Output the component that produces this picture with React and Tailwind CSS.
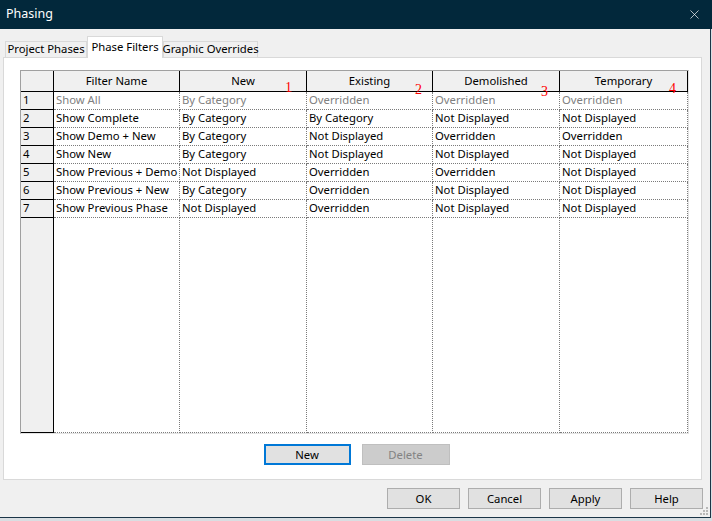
import { X } from 'lucide-react'

const COLUMNAS = ['Filter Name', 'New', 'Existing', 'Demolished', 'Temporary']

const FILTROS = [
    ['Show All', 'By Category', 'Overridden', 'Overridden', 'Overridden'],
    ['Show Complete', 'By Category', 'By Category', 'Not Displayed', 'Not Displayed'],
    ['Show Demo + New', 'By Category', 'Not Displayed', 'Overridden', 'Overridden'],
    ['Show New', 'By Category', 'Not Displayed', 'Not Displayed', 'Not Displayed'],
    ['Show Previous + Demo', 'Not Displayed', 'Overridden', 'Overridden', 'Not Displayed'],
    ['Show Previous + New', 'By Category', 'Overridden', 'Not Displayed', 'Not Displayed'],
    ['Show Previous Phase', 'Not Displayed', 'Overridden', 'Not Displayed', 'Not Displayed'],
]

// marcas rojas sobre la cabecera
const MARCAS = [
    { n: '1', cls: 'left-[264px] top-[10px]' },
    { n: '2', cls: 'left-[394px] top-[12px]' },
    { n: '3', cls: 'left-[520px] top-[14px]' },
    { n: '4', cls: 'left-[648px] top-[11px]' },
]

const GRID = 'grid grid-cols-[33px_126px_127px_126px_127px_128px]'

function Boton({ children, className = '' }) {
    return (
        <button className={`h-[21px] w-[73px] bg-[#e1e1e1] border border-[#adadad] text-black leading-none ${className}`}>
            {children}
        </button>
    )
}

export default function App() {
    return (
        <div className="w-[712px] h-[521px] bg-[#d9dee2] relative font-['Noto_Sans',sans-serif] text-[11.3px] text-black overflow-hidden">
            {/* Barra de título */}
            <div className="h-[29px] bg-[#02283b] flex items-center justify-between pl-[6px] pr-[10px] text-white">
                <span className="text-[12.5px]">Phasing</span>
                <X size={15} strokeWidth={1.1} />
            </div>

            <div className="w-[711px] h-[489px] bg-[#f0f0f0] border-r border-b border-[#1b3547] flex flex-col">
                {/* Pestañas */}
                <div className="mt-[7px] h-[21px] pl-[5px] flex items-end relative z-10">
                    <div className="h-[16px] w-[82px] border border-b-0 border-[#d9d9d9] bg-[#f0f0f0] flex items-center justify-center whitespace-nowrap">
                        Project Phases
                    </div>
                    <div className="h-[22px] w-[76px] -mb-px border border-b-0 border-[#d9d9d9] bg-white flex items-start pt-[2px] justify-center whitespace-nowrap">
                        Phase Filters
                    </div>
                    <div className="h-[16px] w-[95px] border border-b-0 border-[#d9d9d9] bg-[#f0f0f0] flex items-center justify-center whitespace-nowrap">
                        Graphic Overrides
                    </div>
                </div>

                {/* Panel */}
                <div className="ml-[3px] w-[699px] h-[423px] bg-white border border-[#d9d9d9] flex flex-col">
                    <div className="ml-[16px] mt-[12px] w-[669px] h-[364px] border-t border-l border-[#a0a0a0] border-b border-r border-b-[#e3e3e3] border-r-[#e3e3e3] flex flex-col relative">
                        {/* Cabecera */}
                        <div className={`${GRID} h-[21px] bg-[#f0f0f0]`}>
                            <div className="border-r border-b border-black" />
                            {COLUMNAS.map(c => (
                                <div key={c} className="border-r border-b border-black flex items-center justify-center">{c}</div>
                            ))}
                        </div>

                        {/* Filas */}
                        {FILTROS.map((fila, i) => (
                            <div key={i} className={`${GRID} h-[18px] ${i === 0 ? 'text-[#808080]' : 'text-black'}`}>
                                <div className="bg-[#f0f0f0] border-r border-b border-black pl-[2px] flex items-center text-black">{i + 1}</div>
                                {fila.map((v, j) => (
                                    <div key={j} className="border-r border-b border-dotted border-[#7a7a7a] pl-[2px] flex items-center whitespace-nowrap overflow-hidden">
                                        {v}
                                    </div>
                                ))}
                            </div>
                        ))}

                        {/* Relleno */}
                        <div className={`${GRID} flex-1`}>
                            <div className="bg-[#f0f0f0] border-r border-b border-black" />
                            {COLUMNAS.map(c => (
                                <div key={c} className="border-r border-b border-dotted border-[#7a7a7a]" />
                            ))}
                        </div>

                        {MARCAS.map(m => (
                            <span key={m.n} className={`absolute ${m.cls} text-[14px] leading-none text-[#ff0000] font-['Liberation_Serif',serif]`}>{m.n}</span>
                        ))}
                    </div>

                    <div className="mt-[10px] pl-[8px] flex justify-center gap-[11px]">
                        <button className="h-[21px] w-[87px] bg-[#e1e1e1] border-2 border-[#0078d7] text-black leading-none">New</button>
                        <button className="h-[21px] w-[88px] bg-[#cccccc] border border-[#bfbfbf] text-[#838383] leading-none">Delete</button>
                    </div>
                </div>

                {/* Botones inferiores */}
                <div className="mt-[8px] pr-[7px] flex justify-end gap-[8px]">
                    <Boton>OK</Boton>
                    <Boton>Cancel</Boton>
                    <Boton>Apply</Boton>
                    <Boton>Help</Boton>
                </div>
            </div>

            {/* Agarradera de redimensión */}
            <svg className="absolute left-[700px] top-[507px]" width="9" height="9" viewBox="0 0 9 9">
                <rect x="6" y="0" width="2" height="2" fill="#b8b8b8" />
                <rect x="3" y="3" width="2" height="2" fill="#b8b8b8" />
                <rect x="6" y="3" width="2" height="2" fill="#b8b8b8" />
                <rect x="0" y="6" width="2" height="2" fill="#b8b8b8" />
                <rect x="3" y="6" width="2" height="2" fill="#b8b8b8" />
                <rect x="6" y="6" width="2" height="2" fill="#b8b8b8" />
            </svg>
        </div>
    )
}
